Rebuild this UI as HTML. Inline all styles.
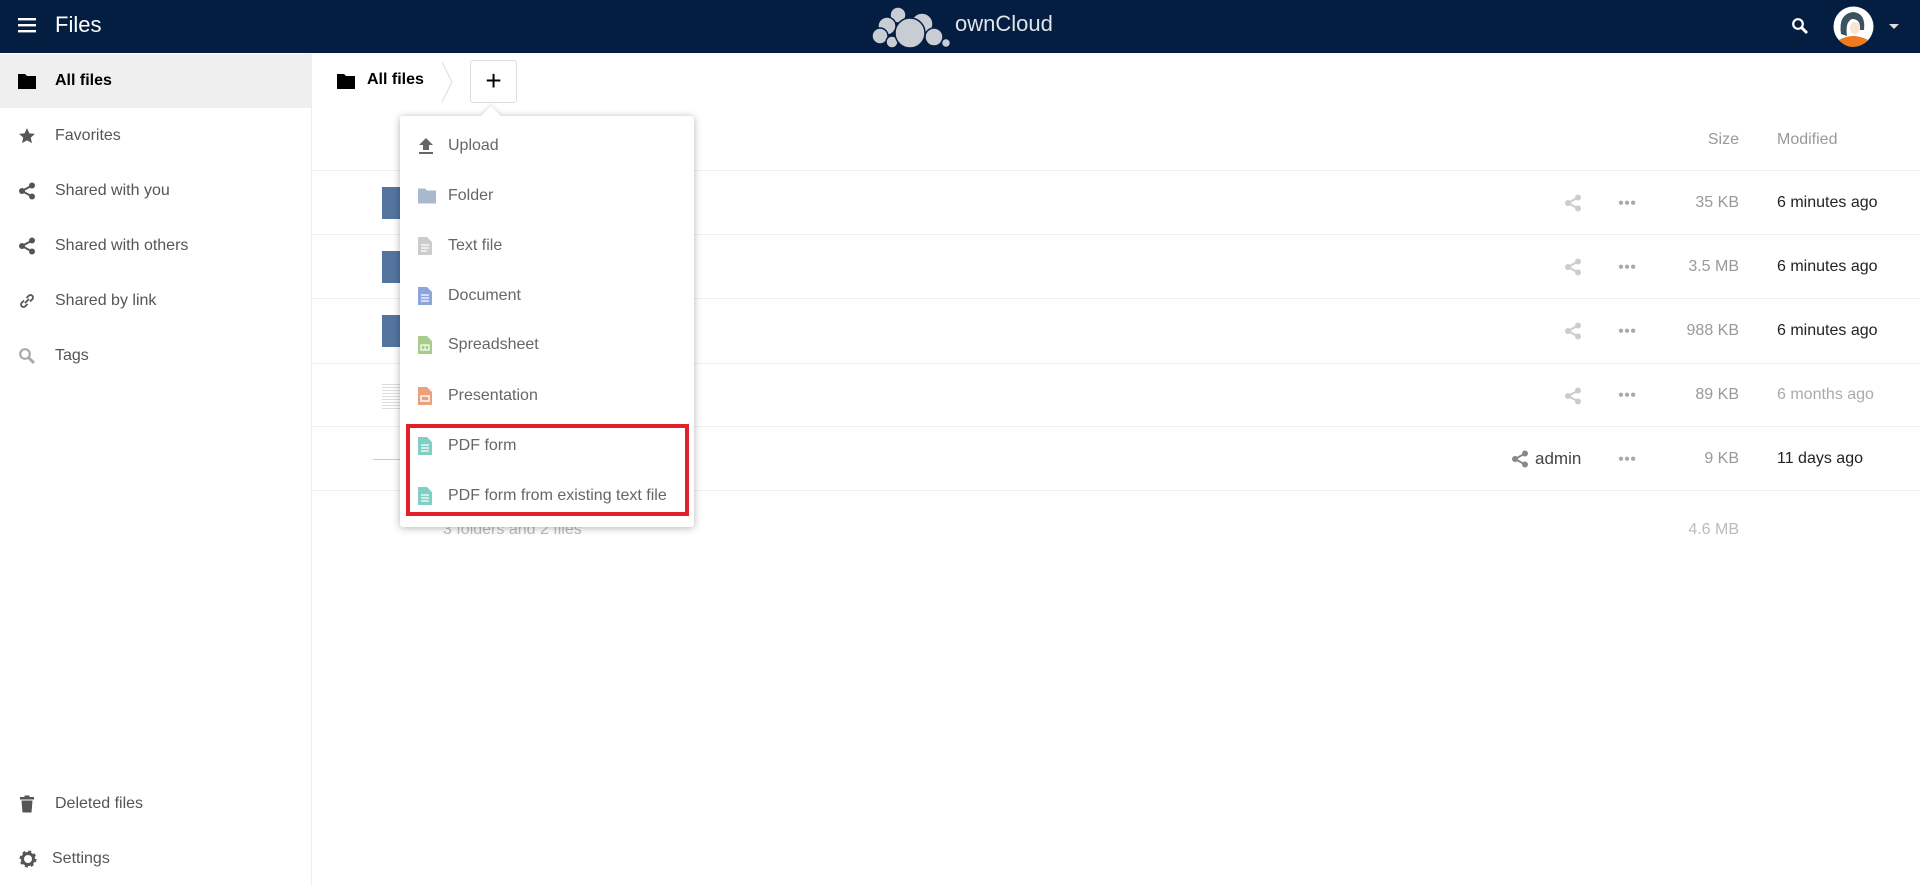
<!DOCTYPE html>
<html><head><meta charset="utf-8"><style>
*{box-sizing:border-box;margin:0;padding:0}
body{width:1920px;height:886px;overflow:hidden;background:#fff;font-family:"Liberation Sans",sans-serif;position:relative;color:#555}
.abs{position:absolute}
#hdr{left:0;top:0;width:1920px;height:53px;background:#041e42}
#side{left:0;top:53px;width:312px;height:833px;border-right:1px solid #eee;background:#fff}
.nav{position:absolute;left:0;width:311px;height:54px;font-size:16px;color:#555;}
.nav .t{position:absolute;left:55px;top:50%;transform:translateY(-50%)}
.nav svg{position:absolute;left:18px;top:50%;transform:translateY(-50%)}
.row{position:absolute;left:313px;width:1607px;height:64px;border-bottom:1px solid #eee}
.cell{position:absolute;top:50%;transform:translateY(-50%);font-size:16px}
.size{right:181px;color:#999;text-align:right}
.mod{left:1464px;color:#222}
.dots{left:1305px;color:#aaa;font-size:10px;letter-spacing:0px}
.mi{position:absolute;left:0;width:294px;height:50px;font-size:16px;color:#666}
.mi .t{position:absolute;left:48px;top:50%;transform:translateY(-50%)}
.mi svg{position:absolute;left:18px;top:50%;transform:translateY(-50%)}
</style></head><body>
<div id="hdr" class="abs">
 <svg class="abs" style="left:18px;top:17px" width="18" height="16"><rect y="1" width="18" height="2.4" fill="#fff"/><rect y="7" width="18" height="2.4" fill="#fff"/><rect y="13" width="18" height="2.4" fill="#fff"/></svg>
 <div class="abs" style="left:55px;top:12px;color:#fff;font-size:22px">Files</div>
 <svg class="abs" style="left:870px;top:3px" width="80" height="46" viewBox="0 0 80 46" fill="#c8ccd3" stroke="#041e42" stroke-width="1.5">
  <circle cx="28" cy="12" r="8"/><circle cx="17" cy="23" r="9"/><circle cx="52" cy="21" r="11"/><circle cx="10" cy="33" r="8"/><circle cx="64" cy="34" r="9"/><circle cx="76" cy="40" r="4.5"/><circle cx="22" cy="39" r="6"/><circle cx="40" cy="30" r="15"/>
 </svg>
 <div class="abs" style="left:955px;top:11px;color:#e0e4ea;font-size:22px">ownCloud</div>
 <svg class="abs" style="left:1791px;top:17px" width="18" height="18" viewBox="0 0 18 18"><circle cx="7" cy="7" r="4.8" fill="none" stroke="#fff" stroke-width="2.2"/><path d="M10.5 10.5 L16 16" stroke="#fff" stroke-width="3"/></svg>
 <svg class="abs" style="left:1833px;top:6px" width="41" height="41" viewBox="0 0 41 41"><circle cx="20.5" cy="20.5" r="20" fill="#fff"/><path d="M6 34 Q20 26 35 34 Q28 41 20 41 Q12 41 6 34Z" fill="#f07a1e"/><path d="M8 28 Q5 8 20 6 Q33 7 31 24 L27 24 Q28 13 19 13 Q12 16 14 30Z" fill="#3d5261"/><ellipse cx="22" cy="22" rx="5" ry="6" fill="#f7e4d4"/></svg>
 <svg class="abs" style="left:1889px;top:24px" width="10" height="6"><path d="M0 0 L10 0 L5 5Z" fill="#ddd"/></svg>
</div>
<div id="side" class="abs">
 <div class="nav" style="top:1px;background:#efefef;color:#000;font-weight:bold"><svg width="18" height="16" viewBox="0 0 18 16"><path d="M0 1h7l2 2h9v13H0z" fill="#000"/></svg><span class="t">All files</span></div>
 <div class="nav" style="top:56px"><svg width="18" height="18" viewBox="0 0 24 24"><path d="M12 1.5l3.2 7 7.3.7-5.5 5 1.6 7.3L12 17.8 5.4 21.5 7 14.2 1.5 9.2l7.3-.7z" fill="#555"/></svg><span class="t">Favorites</span></div>
 <div class="nav" style="top:111px"><svg width="18" height="18" viewBox="0 0 18 18"><circle cx="14" cy="3.5" r="3" fill="#555"/><circle cx="4" cy="9" r="3" fill="#555"/><circle cx="14" cy="14.5" r="3" fill="#555"/><path d="M14 3.5L4 9l10 5.5" stroke="#555" stroke-width="2" fill="none"/></svg><span class="t">Shared with you</span></div>
 <div class="nav" style="top:166px"><svg width="18" height="18" viewBox="0 0 18 18"><circle cx="14" cy="3.5" r="3" fill="#555"/><circle cx="4" cy="9" r="3" fill="#555"/><circle cx="14" cy="14.5" r="3" fill="#555"/><path d="M14 3.5L4 9l10 5.5" stroke="#555" stroke-width="2" fill="none"/></svg><span class="t">Shared with others</span></div>
 <div class="nav" style="top:221px"><svg width="18" height="18" viewBox="0 0 18 18"><path d="M7 11l4-4M6 8.5l-2.5 2.5a2.5 2.5 0 003.5 3.5l2.5-2.5M12 9.5l2.5-2.5a2.5 2.5 0 00-3.5-3.5L8.5 6" stroke="#555" stroke-width="1.8" fill="none"/></svg><span class="t">Shared by link</span></div>
 <div class="nav" style="top:276px"><svg width="18" height="18" viewBox="0 0 18 18"><circle cx="7" cy="7" r="4.8" fill="none" stroke="#aaa" stroke-width="2.2"/><path d="M10.5 10.5L16 16" stroke="#aaa" stroke-width="3"/></svg><span class="t">Tags</span></div>
 <div class="nav" style="top:724px"><svg width="18" height="18" viewBox="0 0 18 18"><rect x="2" y="2" width="14" height="2.5" fill="#555"/><rect x="6.5" y="0.5" width="5" height="2" fill="#555"/><path d="M3.5 5.5h11l-1 12h-9z" fill="#555"/></svg><span class="t">Deleted files</span></div>
 <div class="nav" style="top:779px"><svg width="20" height="20" viewBox="0 0 20 20"><circle cx="10" cy="10" r="6.5" fill="none" stroke="#555" stroke-width="4" stroke-dasharray="2.6 2.5"/><circle cx="10" cy="10" r="5.5" fill="none" stroke="#555" stroke-width="3"/></svg><span class="t" style="left:52px">Settings</span></div>
</div>
<svg class="abs" style="left:337px;top:74px" width="18" height="15" viewBox="0 0 18 15"><path d="M0 0h7l2 2h9v13H0z" fill="#000"/></svg>
<div class="abs" style="left:367px;top:71px;font-size:16px;color:#000;font-weight:bold">All files</div>
<svg class="abs" style="left:440px;top:62px" width="14" height="40"><path d="M2 0L12 20L2 40" stroke="#ddd" fill="none"/></svg>
<div class="abs" style="left:470px;top:60px;width:47px;height:43px;border:1px solid #ddd;border-radius:3px;font-size:28px;color:#000;text-align:center;line-height:40px">+</div>
<div class="row" style="top:107px;height:64px"><span class="cell size" style="right:181px;top:33px">Size</span><span class="cell" style="left:1464px;top:33px;color:#999">Modified</span></div>
<div class="row" style="top:171px"><div class="abs" style="left:69px;top:16px;width:22px;height:32px;background:#5474a0"></div><svg class="abs" style="left:1251px;top:22px" width="18" height="20" viewBox="0 0 18 18"><circle cx="14" cy="3.5" r="3" fill="#ccc"/><circle cx="4" cy="9" r="3" fill="#ccc"/><circle cx="14" cy="14.5" r="3" fill="#ccc"/><path d="M14 3.5L4 9l10 5.5" stroke="#ccc" stroke-width="2" fill="none"/></svg><span class="cell dots">●●●</span><span class="cell size">35 KB</span><span class="cell mod">6 minutes ago</span></div>
<div class="row" style="top:235px"><div class="abs" style="left:69px;top:16px;width:22px;height:32px;background:#5474a0"></div><svg class="abs" style="left:1251px;top:22px" width="18" height="20" viewBox="0 0 18 18"><circle cx="14" cy="3.5" r="3" fill="#ccc"/><circle cx="4" cy="9" r="3" fill="#ccc"/><circle cx="14" cy="14.5" r="3" fill="#ccc"/><path d="M14 3.5L4 9l10 5.5" stroke="#ccc" stroke-width="2" fill="none"/></svg><span class="cell dots">●●●</span><span class="cell size">3.5 MB</span><span class="cell mod">6 minutes ago</span></div>
<div class="row" style="top:299px;height:65px"><div class="abs" style="left:69px;top:16px;width:22px;height:32px;background:#5474a0"></div><svg class="abs" style="left:1251px;top:22px" width="18" height="20" viewBox="0 0 18 18"><circle cx="14" cy="3.5" r="3" fill="#ccc"/><circle cx="4" cy="9" r="3" fill="#ccc"/><circle cx="14" cy="14.5" r="3" fill="#ccc"/><path d="M14 3.5L4 9l10 5.5" stroke="#ccc" stroke-width="2" fill="none"/></svg><span class="cell dots">●●●</span><span class="cell size">988 KB</span><span class="cell mod">6 minutes ago</span></div>
<div class="row" style="top:364px;height:63px"><div class="abs" style="left:69px;top:18px;width:22px;height:28px;background:repeating-linear-gradient(#fff 0 2px,#ddd 2px 3px)"></div><svg class="abs" style="left:1251px;top:22px" width="18" height="20" viewBox="0 0 18 18"><circle cx="14" cy="3.5" r="3" fill="#ccc"/><circle cx="4" cy="9" r="3" fill="#ccc"/><circle cx="14" cy="14.5" r="3" fill="#ccc"/><path d="M14 3.5L4 9l10 5.5" stroke="#ccc" stroke-width="2" fill="none"/></svg><span class="cell dots">●●●</span><span class="cell size">89 KB</span><span class="cell mod" style="color:#aaa">6 months ago</span></div>
<div class="row" style="top:427px"><div class="abs" style="left:60px;top:32px;width:30px;height:1px;background:#ccc"></div><svg class="abs" style="left:1198px;top:22px" width="18" height="20" viewBox="0 0 18 18"><circle cx="14" cy="3.5" r="3" fill="#888"/><circle cx="4" cy="9" r="3" fill="#888"/><circle cx="14" cy="14.5" r="3" fill="#888"/><path d="M14 3.5L4 9l10 5.5" stroke="#888" stroke-width="2" fill="none"/></svg><span class="cell" style="left:1222px;color:#444;font-size:17px">admin</span><span class="cell dots">●●●</span><span class="cell size">9 KB</span><span class="cell mod">11 days ago</span></div>
<div class="abs" style="left:443px;top:521px;font-size:16px;color:#bbb">3 folders and 2 files</div>
<div class="abs" style="right:181px;top:521px;font-size:16px;color:#bbb">4.6 MB</div>
<div class="abs" style="left:400px;top:116px;width:294px;height:411px;background:#fff;border-radius:3px;box-shadow:0 1px 8px rgba(0,0,0,.3)">
 <div class="abs" style="left:84px;top:-7px;width:14px;height:14px;background:#fff;transform:rotate(45deg);box-shadow:-2px -2px 3px rgba(0,0,0,.08)"></div>
 <div class="mi" style="top:5px"><svg width="16" height="18" viewBox="0 0 16 18"><path d="M8 1L1 8h4v5h6V8h4z M1 15h14v2H1z" fill="#666"/></svg><span class="t">Upload</span></div>
 <div class="mi" style="top:55px"><svg width="18" height="15" viewBox="0 0 18 15"><path d="M0 0h7l2 2h9v13H0z" fill="#a8b8cf"/></svg><span class="t">Folder</span></div>
 <div class="mi" style="top:105px"><svg width="14" height="18" viewBox="0 0 14 18"><path d="M0 0h9l5 5v13H0z" fill="#ccc"/><path d="M3 8h8M3 11h8M3 14h6" stroke="#fff" stroke-width="1.3"/></svg><span class="t">Text file</span></div>
 <div class="mi" style="top:155px"><svg width="14" height="18" viewBox="0 0 14 18"><path d="M0 0h9l5 5v13H0z" fill="#8ca5e0"/><path d="M3 8h8M3 11h8M3 14h8" stroke="#fff" stroke-width="1.3"/></svg><span class="t">Document</span></div>
 <div class="mi" style="top:204px"><svg width="14" height="18" viewBox="0 0 14 18"><path d="M0 0h9l5 5v13H0z" fill="#a9cc8a"/><rect x="3" y="9" width="8" height="5" fill="none" stroke="#fff" stroke-width="1.2"/><path d="M7 9v5" stroke="#fff"/></svg><span class="t">Spreadsheet</span></div>
 <div class="mi" style="top:255px"><svg width="14" height="18" viewBox="0 0 14 18"><path d="M0 0h9l5 5v13H0z" fill="#eba27c"/><rect x="3" y="9" width="8" height="5" fill="none" stroke="#fff" stroke-width="1.4"/></svg><span class="t">Presentation</span></div>
 <div class="mi" style="top:305px"><svg width="14" height="18" viewBox="0 0 14 18"><path d="M0 0h9l5 5v13H0z" fill="#7fcfc4"/><path d="M3 8h8M3 11h8M3 14h8" stroke="#fff" stroke-width="1.3"/></svg><span class="t">PDF form</span></div>
 <div class="mi" style="top:355px"><svg width="14" height="18" viewBox="0 0 14 18"><path d="M0 0h9l5 5v13H0z" fill="#7fcfc4"/><path d="M3 8h8M3 11h8M3 14h8" stroke="#fff" stroke-width="1.3"/></svg><span class="t">PDF form from existing text file</span></div>
</div>
<div class="abs" style="left:406px;top:424px;width:283px;height:92px;border:4px solid #e0202a"></div>
</body></html>
